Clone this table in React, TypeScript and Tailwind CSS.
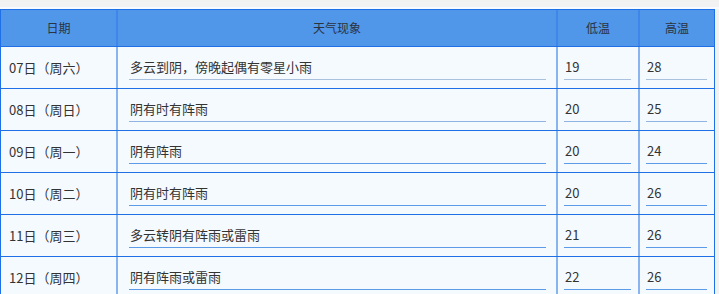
import React from "react";

const rows = [
  { d: "07日（周六）", w: "多云到阴，傍晚起偶有零星小雨", lo: "19", hi: "28" },
  { d: "08日（周日）", w: "阴有时有阵雨", lo: "20", hi: "25" },
  { d: "09日（周一）", w: "阴有阵雨", lo: "20", hi: "24" },
  { d: "10日（周二）", w: "阴有时有阵雨", lo: "20", hi: "26" },
  { d: "11日（周三）", w: "多云转阴有阵雨或雷雨", lo: "21", hi: "26" },
  { d: "12日（周四）", w: "阴有阵雨或雷雨", lo: "22", hi: "26" },
];

export default function App() {
  return (
    <div
      className="w-[719px] h-[294px] overflow-hidden bg-[#f2f2f2] text-[#333]"
      style={{ fontFamily: '"Noto Sans CJK SC", "Noto Sans", sans-serif' }}
    >
      <div className="h-[7px] bg-[#f2f2f2]" />
      <div className="h-[2px] bg-[#f7fafe]" />
      <div className="w-[715px] border-t border-l border-r border-[#1f6fe6] bg-[#f5faff]">
        <div className="flex h-[37px] bg-[#5096e9] border-b border-[#1f6fe6] text-[12px] text-[#2b3340]">
          <div className="w-[115px] flex items-center justify-center">日期</div>
          <div className="w-[440px] border-l-2 border-[#3f86ea] flex items-center justify-center">天气现象</div>
          <div className="w-[82px] border-l-2 border-[#3f86ea] flex items-center justify-center">低温</div>
          <div className="flex-1 border-l-2 border-[#3f86ea] flex items-center justify-center">高温</div>
        </div>
        {rows.map((r, i) => {
          const line = i === 0 ? "border-[#a9c1de]" : i === 1 ? "border-[#8fb4e4]" : "border-[#5b9be8]";
          return (
            <div key={i} className="flex h-[42px] border-b border-[#1f6fe6] text-[13px]">
              <div className="w-[115px] flex items-center pl-[8px]">{r.d}</div>
              <div className="w-[440px] border-l-2 border-[#8ab4ef] pl-[11px] pr-[10px] pt-[8px]">
                <div className={`h-[25px] border-b ${line} flex items-center pl-[1px]`}>{r.w}</div>
              </div>
              <div className="w-[82px] border-l-2 border-[#8ab4ef] pl-[6px] pr-[7px] pt-[8px]">
                <div className={`h-[25px] border-b ${line} flex items-center pl-[1px]`}>{r.lo}</div>
              </div>
              <div className="flex-1 border-l-2 border-[#8ab4ef] pl-[6px] pr-[7px] pt-[8px]">
                <div className={`h-[25px] border-b ${line} flex items-center pl-[1px]`}>{r.hi}</div>
              </div>
            </div>
          );
        })}
      </div>
    </div>
  );
}
